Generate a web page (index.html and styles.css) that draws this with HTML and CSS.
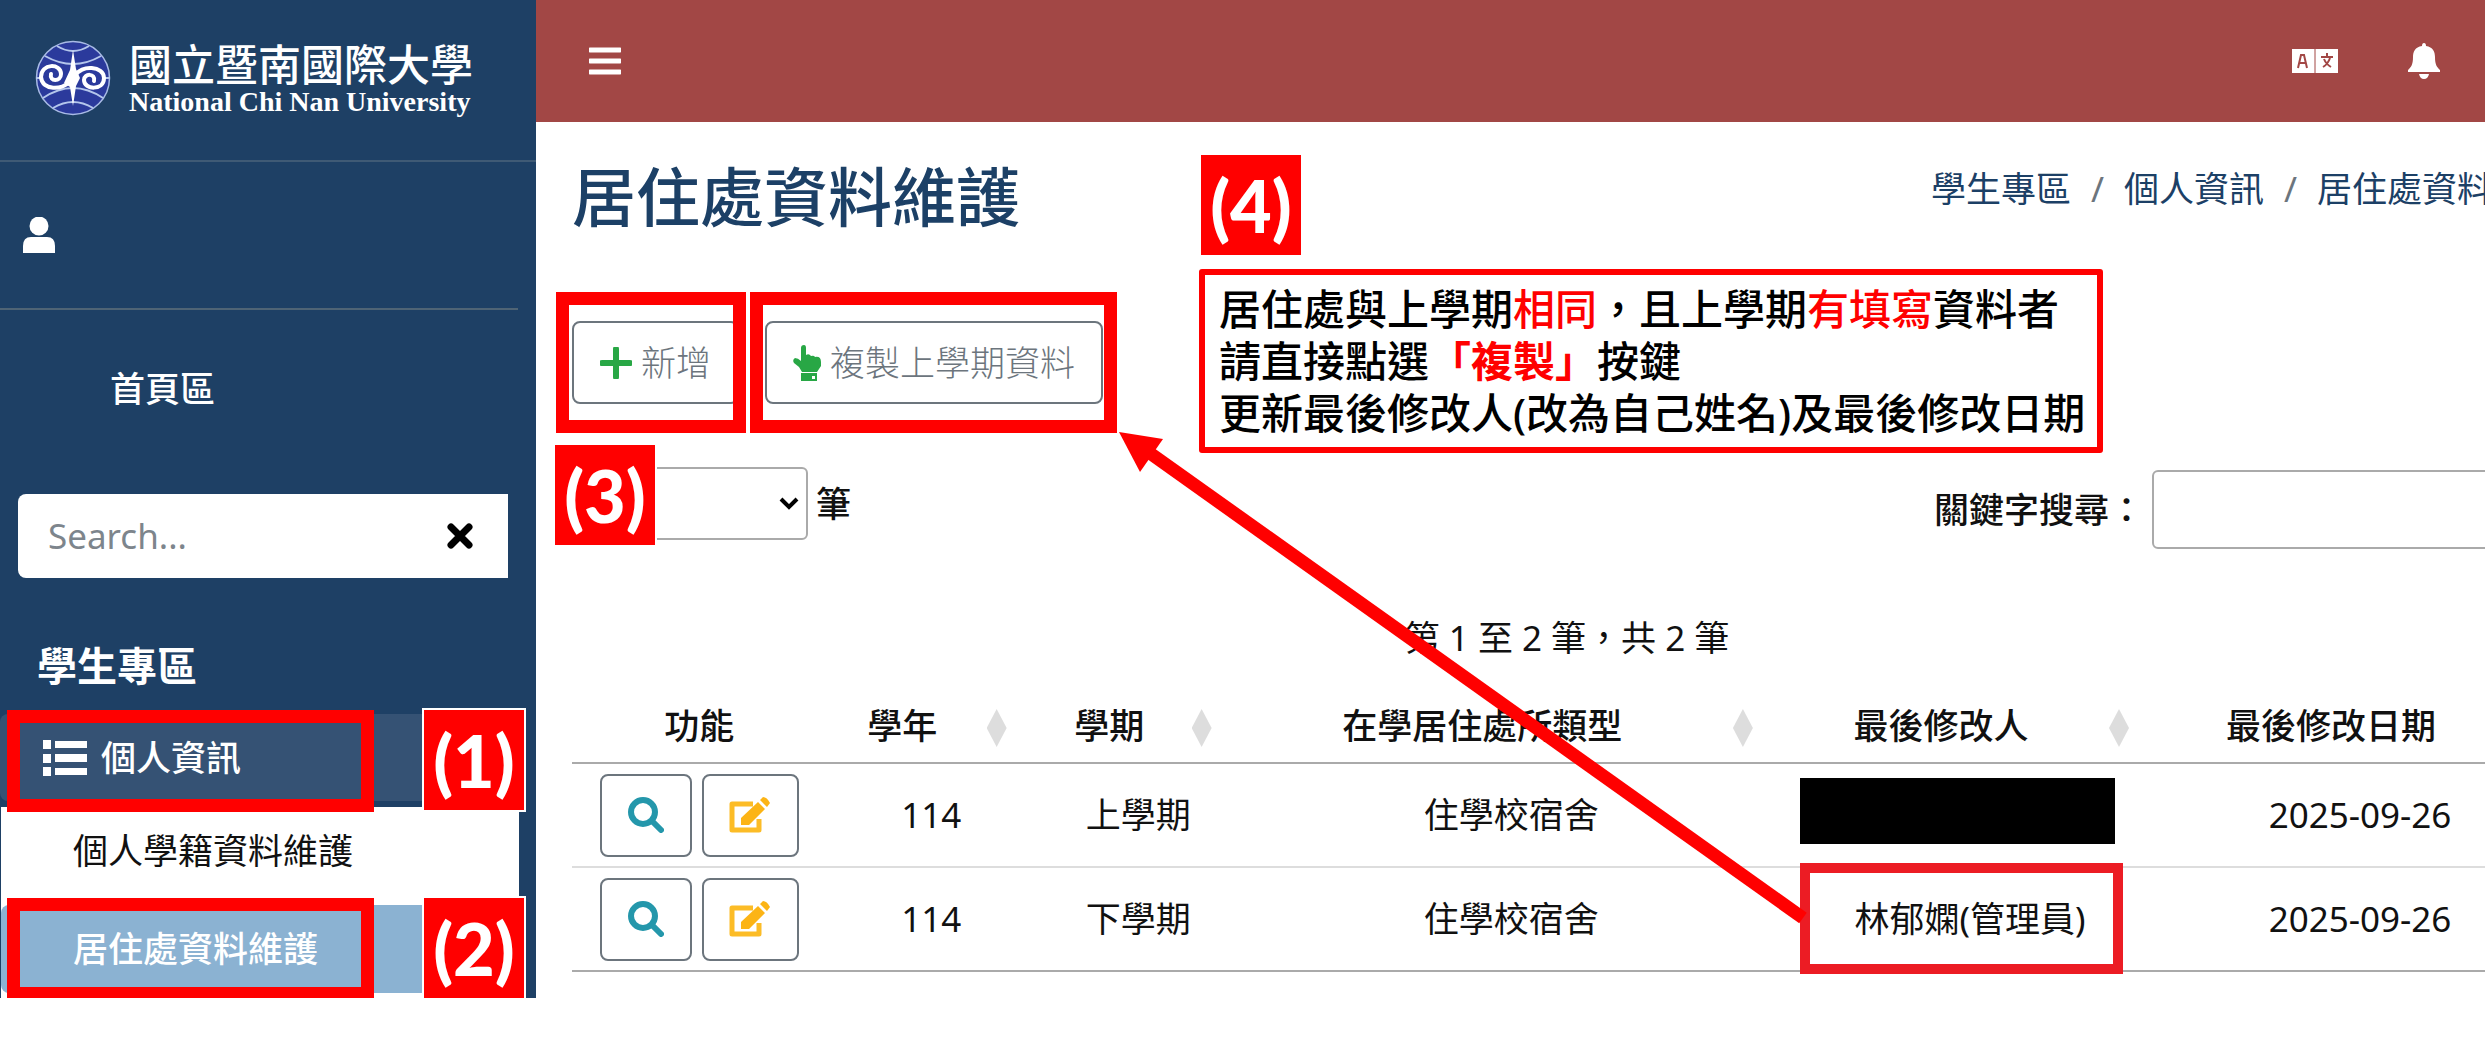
FILE: index.html
```html
<!DOCTYPE html>
<html lang="zh-Hant">
<head>
	<meta charset="UTF-8">
	<meta name="viewport" content="width=device-width, initial-scale=1.0">
	<title>居住處資料維護</title>
	<link rel="stylesheet" href="styles.css">
</head>
<body>
	<div class="wrapper">
		<aside class="sidebar">
			<a class="brand" href="#">
				<svg class="brand-logo" viewBox="0 0 76 76">
					<circle cx="38" cy="38" r="36.500" fill="#2b3a9c" stroke="#a9bbe6" stroke-width="1.500"/>
					<path d="M22 6Q38 16 54 6M10 16Q38 32 66 16M8 58Q38 38 68 58M18 68Q38 56 58 68M1 38H7M69 38H75" fill="none" stroke="#b4c6ec" stroke-width="2"/>
					<g fill="none" stroke="#fff" stroke-linecap="round">
						<path d="M34 42C28 50 7 51 6 37C6 23 26 23 26 34C26 42 14 42 16 34" stroke-width="4"/>
						<path d="M40 36C46 24 69 26 69 38C69 51 49 50 49 40C49 33 61 33 59 41" stroke-width="4"/>
					</g>
					<path d="M38 10L41 29L45 38L41 46L38 66L35 47L29 43L35 30Z" fill="#fff"/>
				</svg>
				<span class="brand-text">
					<span class="brand-zh">國立暨南國際大學</span>
					<span class="brand-en">National Chi Nan University</span>
				</span>
			</a>
			<div class="user-panel">
				<svg width="32" height="36" viewBox="0 0 32 36" fill="#fff"><circle cx="16" cy="9" r="9.500"/><path d="M0 32V29Q0 20 8 20H24Q32 20 32 29V36H0Z"/></svg>
			</div>
			<a class="home-link" href="#">首頁區</a>
			<form class="sidebar-search">
				<input type="text" placeholder="Search..." aria-label="Search">
				<button type="button" aria-label="清除">
					<svg width="26" height="26" viewBox="0 0 26 26"><path d="M4 4L22 22M22 4L4 22" stroke="#000" stroke-width="7" stroke-linecap="round"/></svg>
				</button>
			</form>
			<h2 class="nav-header">學生專區</h2>
			<nav>
				<a class="nav-parent" href="#">
					<svg width="44" height="36" viewBox="0 0 44 36" fill="#fff"><path d="M0 0h8v9H0zM0 14h8v9H0zM0 27h8v9H0zM12 1h32v7H12zM12 14h32v8H12zM12 28h32v7H12z"/></svg>
					個人資訊
				</a>
				<ul class="nav-sub">
					<li><a href="#">個人學籍資料維護</a></li>
					<li><a class="active" href="#">居住處資料維護</a></li>
				</ul>
			</nav>
		</aside>

		<main class="main">
			<header class="topbar">
				<button type="button" class="icon-btn" aria-label="選單">
					<svg width="32" height="30" viewBox="0 0 32 30"><path d="M1 4H31M1 15H31M1 26H31" stroke="#fff" stroke-width="5" stroke-linecap="round"/></svg>
				</button>
				<div class="topbar-right">
					<button type="button" class="icon-btn" aria-label="語言">
						<svg width="46" height="24" viewBox="0 0 46 24">
							<path d="M0 0H46V24H0Z" fill="#fff"/>
							<g fill="none" stroke="#a24745" stroke-width="2"><path d="M6 19L9 6H12L15 19M7 14H14M29 8H41M35 4V8M38 9Q36 15 31 18M32 10Q34 15 39 18"/><path d="M23 0V24" stroke-width="1"/></g>
						</svg>
					</button>
					<button type="button" class="icon-btn" aria-label="通知">
						<svg width="32" height="36" viewBox="0 0 32 36" fill="#fff"><path d="M14 3Q14 0 16 0Q18 0 18 3C25 4 27 9 27 14C27 22 29 24 32 27V29H0V27C3 24 5 22 5 14C5 9 7 4 14 3ZM11 31H21Q20 36 16 36Q12 36 11 31Z"/></svg>
					</button>
				</div>
			</header>

			<div class="content">
				<div class="page-head">
					<h1>居住處資料維護</h1>
					<ol class="breadcrumb">
						<li><a href="#">學生專區</a></li>
						<li><a href="#">個人資訊</a></li>
						<li><a href="#">居住處資料維護</a></li>
					</ol>
				</div>

				<div class="toolbar">
					<button type="button" class="btn">
						<svg width="32" height="32" viewBox="0 0 32 32"><path d="M16 2V30M2 16H30" stroke="#28a745" stroke-width="6" stroke-linecap="round"/></svg>
						新增
					</button>
					<button type="button" class="btn">
						<svg width="28" height="36" viewBox="0 0 28 36" fill="#28a745"><path d="M8 3Q8 0 11 0Q13 0 13 3V10Q16 8 18 11Q21 10 22 12Q28 11 28 17V21L24 27H9L6 22L1 18Q-1 15 2 13Q5 13 8 16Z"/><path fill-rule="evenodd" d="M8 28H24V36H8ZM19 31V34H22V31Z"/></svg>
						複製上學期資料
					</button>
				</div>

				<div class="filters">
					<label class="length">
						<span class="select-wrap">
							<select>
								<option>10</option>
								<option>25</option>
							</select>
							<svg width="20" height="14" viewBox="0 0 20 14"><path d="M2 3L10 11L18 3" fill="none" stroke="#000" stroke-width="4"/></svg>
						</span>
						筆
					</label>
					<label class="keyword">關鍵字搜尋：<input type="search"></label>
				</div>

				<p class="table-info">第 1 至 2 筆，共 2 筆</p>

				<table class="records">
					<colgroup>
						<col class="col-func">
						<col class="col-year">
						<col class="col-term">
						<col class="col-type">
						<col class="col-editor">
						<col class="col-date">
					</colgroup>
					<thead>
						<tr>
							<th>功能</th>
							<th class="sortable">學年</th>
							<th class="sortable">學期</th>
							<th class="sortable">在學居住處所類型</th>
							<th class="sortable">最後修改人</th>
							<th class="sortable">最後修改日期</th>
						</tr>
					</thead>
					<tbody>
						<tr>
							<td>
								<div class="actions">
									<button type="button" class="btn btn-view" aria-label="檢視"><svg width="36" height="36" viewBox="0 0 36 36" fill="none" stroke="#2497ab" stroke-width="6"><circle cx="15" cy="15" r="12"/><path d="M24 24L33 33" stroke-width="6" stroke-linecap="round"/></svg></button>
									<button type="button" class="btn btn-edit" aria-label="編輯"><svg width="42" height="36" viewBox="0 0 42 36"><path d="M24 7H3V33H30V22" fill="none" stroke="#fcbc26" stroke-width="5" stroke-linejoin="round"/><path d="M12 28V21L29 5L36 12L20 28ZM31 3L34 0Q38 0 41 6L38 10Z" fill="#fcb415"/></svg></button>
								</div>
							</td>
							<td>114</td>
							<td>上學期</td>
							<td>住學校宿舍</td>
							<td><span class="redacted"></span></td>
							<td>2025-09-26</td>
						</tr>
						<tr>
							<td>
								<div class="actions">
									<button type="button" class="btn btn-view" aria-label="檢視"><svg width="36" height="36" viewBox="0 0 36 36" fill="none" stroke="#2497ab" stroke-width="6"><circle cx="15" cy="15" r="12"/><path d="M24 24L33 33" stroke-width="6" stroke-linecap="round"/></svg></button>
									<button type="button" class="btn btn-edit" aria-label="編輯"><svg width="42" height="36" viewBox="0 0 42 36"><path d="M24 7H3V33H30V22" fill="none" stroke="#fcbc26" stroke-width="5" stroke-linejoin="round"/><path d="M12 28V21L29 5L36 12L20 28ZM31 3L34 0Q38 0 41 6L38 10Z" fill="#fcb415"/></svg></button>
								</div>
							</td>
							<td>114</td>
							<td>下學期</td>
							<td>住學校宿舍</td>
							<td>林郁嫻(管理員)</td>
							<td>2025-09-26</td>
						</tr>
					</tbody>
				</table>
			</div>
		</main>
	</div>

	<!-- step marks drawn over the page -->
	<div class="mark mark-menu"></div>
	<div class="mark mark-submenu"></div>
	<div class="mark mark-add"></div>
	<div class="mark mark-copy"></div>
	<div class="mark mark-editor"></div>
	<svg class="arrow" width="700" height="500" viewBox="0 0 700 500">
		<path d="M30 21L693 493" stroke="#f00" stroke-width="13"/>
		<path d="M9 7L53 14L30 47Z" fill="#f00"/>
	</svg>
	<span class="step step-1">(1)</span>
	<span class="step step-2">(2)</span>
	<span class="step step-3">(3)</span>
	<span class="step step-4">(4)</span>
	<div class="note">
		居住處與上學期<em>相同</em>，且上學期<em>有填寫</em>資料者<br>
		請直接點選<strong>「複製」</strong>按鍵<br>
		更新最後修改人(改為自己姓名)及最後修改日期
	</div>
</body>
</html>
```
FILE: styles.css
```css
* {
	box-sizing: border-box;
}

body {
	position: relative;
	margin: 0;
	overflow: hidden;
	background-color: #fff;
	color: #111;
	font-family: "Noto Sans", "Noto Sans CJK TC", sans-serif;
	font-size: 35px;
	line-height: 52px;
}

a {
	color: inherit;
	text-decoration: none;
}

svg {
	display: block;
	flex: none;
}

button,
input,
select {
	font: inherit;
	color: inherit;
}

.wrapper {
	display: flex;
	align-items: flex-start;
}

/* sidebar */
.sidebar {
	flex: none;
	width: 536px;
	padding-bottom: 5px;
	background-color: #1e4065;
	color: #fff;
}

.brand {
	display: flex;
	align-items: center;
	gap: 18px;
	height: 162px;
	padding: 0 0 4px 35px;
	border-bottom: 2px solid #3f5a75;
}

.brand-logo {
	width: 76px;
	height: 76px;
}

.brand-text {
	display: flex;
	flex-direction: column;
}

.brand-zh {
	font-family: "Noto Sans CJK TC", sans-serif;
	font-size: 43px;
	font-weight: 500;
	line-height: 48px;
}

.brand-en {
	font-family: "Liberation Serif", serif;
	font-size: 28px;
	font-weight: bold;
	line-height: 32px;
}

.user-panel {
	display: flex;
	align-items: center;
	height: 148px;
	margin-right: 18px;
	padding-left: 23px;
	border-bottom: 2px solid #4f6475;
}

.home-link {
	display: block;
	margin-top: 53px;
	padding-left: 110px;
	font-weight: 500;
}

.sidebar-search {
	display: flex;
	height: 84px;
	margin: 79px 28px 58px 18px;
	background-color: #fff;
	border-radius: 8px 0 0 8px;
}

.sidebar-search input {
	flex: 1;
	min-width: 0;
	padding: 0 30px;
	border: 0;
	background: none;
	color: #000;
}

.sidebar-search input::placeholder {
	color: #7d858c;
}

.sidebar-search button {
	padding: 0 35px;
	border: 0;
	background: none;
}

.nav-header {
	margin: 0 0 18px;
	padding-left: 37px;
	font-size: 40px;
	font-weight: bold;
	line-height: 60px;
}

.nav-parent {
	display: flex;
	align-items: center;
	gap: 14px;
	height: 87px;
	margin: 0 18px 6px 0;
	padding-left: 43px;
	background-color: #355274;
	border-radius: 8px;
	font-weight: 500;
}

.nav-sub {
	margin: 0 17px -5px 1px;
	padding: 0 0 5px;
	list-style: none;
	background-color: #fff;
	color: #111;
}

.nav-sub a {
	display: block;
	padding: 18px 0 18px 72px;
}

.nav-sub li:first-child {
	padding-bottom: 10px;
}

.nav-sub .active {
	background-color: #8bb2d2;
	border-radius: 8px;
	color: #fff;
	font-weight: 500;
}

/* top bar */
.main {
	flex: 1;
	min-width: 0;
}

.topbar {
	display: flex;
	justify-content: space-between;
	align-items: center;
	height: 122px;
	padding: 0 45px 0 53px;
	background-color: #a24745;
}

.topbar-right {
	display: flex;
	align-items: center;
	gap: 70px;
}

.icon-btn {
	padding: 0;
	border: 0;
	background: none;
}

/* page content, runs past the right edge of the window */
.content {
	margin-right: -77px;
	padding: 35px 0 0 36px;
}

.page-head {
	display: flex;
	justify-content: space-between;
	align-items: flex-start;
	margin-bottom: 84px;
}

h1 {
	margin: 0;
	color: #1c4066;
	font-size: 64px;
	font-weight: 500;
	line-height: 80px;
}

.breadcrumb {
	display: flex;
	margin: 0;
	padding: 0;
	list-style: none;
	color: #1c4066;
	line-height: 64px;
}

.breadcrumb li + li::before {
	content: "/";
	padding: 0 20px;
	color: #6c757d;
}

.toolbar {
	display: flex;
	gap: 26px;
}

.btn {
	display: flex;
	align-items: center;
	justify-content: center;
	gap: 9px;
	height: 83px;
	padding: 0 26px;
	background-color: #fff;
	border: 2px solid #6c757d;
	border-radius: 8px;
	color: #6c757d;
	font-weight: 300;
}

.filters {
	display: flex;
	justify-content: space-between;
	align-items: flex-start;
	margin: 63px 0;
	height: 82px;
	font-weight: 500;
}

.length {
	display: flex;
	align-items: center;
	gap: 8px;
}

.select-wrap {
	position: relative;
}

.select-wrap svg {
	position: absolute;
	top: 29px;
	right: 9px;
	pointer-events: none;
}

.length select {
	display: block;
	width: 236px;
	height: 73px;
	padding: 0 18px;
	appearance: none;
	background-color: #fff;
	border: 2px solid #aaa;
	border-radius: 6px;
}

.keyword {
	display: flex;
	align-items: center;
	gap: 8px;
	padding-top: 3px;
}

.keyword input {
	width: 410px;
	height: 79px;
	background-color: #fff;
	border: 2px solid #aaa;
	border-radius: 6px;
}

.table-info {
	margin: 0;
	text-align: center;
}

/* records table */
.records {
	width: 100%;
	table-layout: fixed;
	border-collapse: collapse;
	text-align: center;
}

.col-func { width: 12.8%; }
.col-year { width: 10.5%; }
.col-term { width: 10.3%; }
.col-type { width: 27.2%; }
.col-editor { width: 18.9%; }
.col-date { width: 20.3%; }

.records th {
	position: relative;
	padding: 36px 0 10px;
	border-bottom: 2px solid #aaa;
	font-weight: 500;
}

.records th.sortable {
	padding-right: 58px;
}

.sortable::after {
	content: "";
	position: absolute;
	right: 29px;
	bottom: 15px;
	width: 20px;
	height: 38px;
	background-color: #ddd;
	clip-path: polygon(50% 0, 100% 50%, 50% 100%, 0 50%);
}

.records td {
	height: 104px;
	padding: 0;
	border-bottom: 2px solid #ddd;
}

.records tr:last-child td {
	border-bottom-color: #aaa;
}

.actions {
	display: flex;
	justify-content: center;
	gap: 10px;
}

.btn-view {
	width: 92px;
}

.btn-edit {
	width: 97px;
}

.redacted {
	display: block;
	width: 315px;
	height: 66px;
	margin: 0 auto 8px 18px;
	background-color: #000;
}

/* step marks */
.mark,
.step,
.arrow,
.note {
	position: absolute;
}

.mark {
	border: 13px solid #f00;
}

.mark-menu,
.mark-submenu {
	left: 7px;
	width: 367px;
	height: 102px;
}

.mark-menu { top: 710px; }
.mark-submenu { top: 898px; }

.mark-add,
.mark-copy {
	top: 292px;
	height: 141px;
}

.mark-add {
	left: 556px;
	width: 190px;
}

.mark-copy {
	left: 750px;
	width: 367px;
}

.mark-editor {
	top: 863px;
	left: 1800px;
	width: 323px;
	height: 111px;
	border: 10px solid #ec1c24;
}

.arrow {
	top: 425px;
	left: 1110px;
}

.step {
	width: 104px;
	height: 104px;
	border: 2px solid #fff;
	background-color: #f00;
	color: #fff;
	font-family: Lato, sans-serif;
	font-size: 72px;
	font-weight: 900;
	line-height: 100px;
	text-align: center;
}

.step-1 {
	top: 708px;
	left: 422px;
}

.step-2 {
	top: 896px;
	left: 422px;
}

.step-3 {
	top: 443px;
	left: 553px;
}

.step-4 {
	top: 153px;
	left: 1199px;
}

.note {
	top: 269px;
	left: 1199px;
	padding: 8px 12px 8px 14px;
	border: 6px solid #f00;
	border-radius: 3px;
	background-color: #fff;
	color: #000;
	font-size: 42px;
	font-weight: 500;
	white-space: nowrap;
}

.note em {
	color: #f00;
	font-style: normal;
}

.note strong {
	color: #f00;
	font-weight: bold;
}
```
